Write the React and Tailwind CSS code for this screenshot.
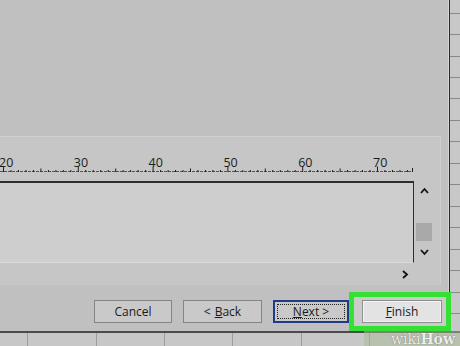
import React from "react";

function Ruler() {
  const x = (n) => 3 + (n - 20) * 7.48;
  const ticks = [];
  for (let n = 20; n <= 74; n++) {
    const major = n % 10 === 0;
    const mid = n % 5 === 0;
    const y1 = major ? 29.5 : mid ? 31.5 : 33;
    ticks.push(
      <line key={n} x1={x(n) + 0.5} x2={x(n) + 0.5} y1={y1} y2={35} stroke="#1e1e1e" strokeWidth="1" />
    );
  }
  const nums = [20, 30, 40, 50, 60, 70];
  return (
    <svg width="414" height="44" className="block">
      <line x1="0" x2="413" y1="34.5" y2="34.5" stroke="#555" strokeWidth="1" strokeDasharray="3 1" />
      {ticks}
      <line x1="412.5" x2="412.5" y1="31" y2="35" stroke="#1e1e1e" strokeWidth="1" />
      {nums.map((n) => (
        <text
          key={n}
          x={x(n) - 4}
          y="29.5"
          fontSize="12.5"
          fill="#1c1c1c"
          fontFamily="'Open Sans', sans-serif"
        >
          {n}
        </text>
      ))}
    </svg>
  );
}

function Chevron({ dir }) {
  const paths = {
    up: "M1 6 L4.5 2 L8 6",
    down: "M1 2 L4.5 6 L8 2",
    right: "M2 1 L6 4.5 L2 8",
  };
  return (
    <svg width="9" height="9" viewBox="0 0 9 9" className="block">
      <path d={paths[dir]} fill="none" stroke="#111" strokeWidth="1.8" strokeLinejoin="miter" />
    </svg>
  );
}

export default function App() {
  const stripRows = [14, 21, 22, 21, 21, 22, 21, 22, 21, 22, 21, 22, 21, 22, 21, 22];
  const gridCells = [28, 69, 68, 68, 69, 68, 68, 30];
  return (
    <div className="relative w-[460px] h-[346px] overflow-hidden bg-[#c0c0c0] flex flex-col font-['Open_Sans',sans-serif]">
      <div className="flex h-[331px]">
        <div className="w-[448px] flex flex-col">
          <div className="h-[136px]" />
          <div className="w-[441px] h-[149px] bg-[#c6c6c6] border-t border-r border-[#cfcfcf] flex">
            <div className="w-[414px] flex flex-col">
              <div className="h-[44px]">
                <Ruler />
              </div>
              <div className="h-[82px] bg-[#cecece] border-t-2 border-r border-[#2e2e2e] border-b border-b-[#dadada]" />
              <div className="h-[22px] flex items-center justify-end pr-[4px]">
                <Chevron dir="right" />
              </div>
            </div>
            <div className="w-[26px] flex flex-col pl-[2px]">
              <div className="h-[44px]" />
              <div className="w-[16px] flex justify-center mt-[6px]">
                <Chevron dir="up" />
              </div>
              <div className="w-[16px] h-[18px] bg-[#a9a9a9] mt-[27px]" />
              <div className="w-[16px] flex justify-center mt-[7px]">
                <Chevron dir="down" />
              </div>
            </div>
          </div>
          <div className="flex items-start pt-[15px] pl-[94px] text-[12px] text-[#1a1a1a] leading-none">
            <div className="w-[78px] h-[23px] flex items-center justify-center bg-[#c9c9c9] border border-[#858585]">
              Cancel
            </div>
            <div className="ml-[11px] w-[79px] h-[23px] flex items-center justify-center bg-[#c9c9c9] border border-[#858585]">
              &lt; <span className="underline ml-[4px]">B</span>ack
            </div>
            <div className="relative ml-[11px] w-[76px] h-[23px] flex items-center justify-center bg-[#c9c9c9] border-2 border-[#1f3b86]">
              <span className="absolute inset-[2px] border border-dotted border-[#222]" />
              <span className="underline">N</span>ext &gt;
            </div>
            <div className="relative ml-[13px] w-[80px] h-[23px]">
              <div className="absolute left-[-13px] top-[-8px] w-[102px] h-[39px] border-[5px] border-[#33e133] bg-[#cbcbcb]" />
              <div className="relative w-[80px] h-[23px] flex items-center justify-center bg-[#e3e3e3] border border-[#8f8f8f] shadow-[inset_0_0_0_1px_#f4f4f4]">
                <span className="underline">F</span>inish
              </div>
            </div>
          </div>
        </div>
        <div className="w-[2px] bg-[#2b2b2b] border-l border-[#d6d6d6]" />
        <div className="w-[10px] flex flex-col bg-[#c8c8c8]">
          {stripRows.map((h, i) => (
            <div key={i} style={{ height: h }} className="shrink-0 border-b border-[#8a8a8a]" />
          ))}
        </div>
      </div>
      <div className="h-[15px] flex border-t-2 border-[#4a4a4a] bg-[#c7c7c7]">
        {gridCells.map((w, i) => (
          <div key={i} style={{ width: w }} className="shrink-0 border-r border-[#9c9c9c]" />
        ))}
      </div>
      <div className="absolute right-0 bottom-0 w-[96px] h-[15px] bg-[#a7bb94]/50 flex items-center justify-end pr-[5px]">
        <span className="font-['DejaVu_Serif',serif] text-[14px] leading-none text-[#eeeeee] [text-shadow:0_0_1px_#555]">
          wiki<span className="font-bold">How</span>
        </span>
      </div>
    </div>
  );
}
